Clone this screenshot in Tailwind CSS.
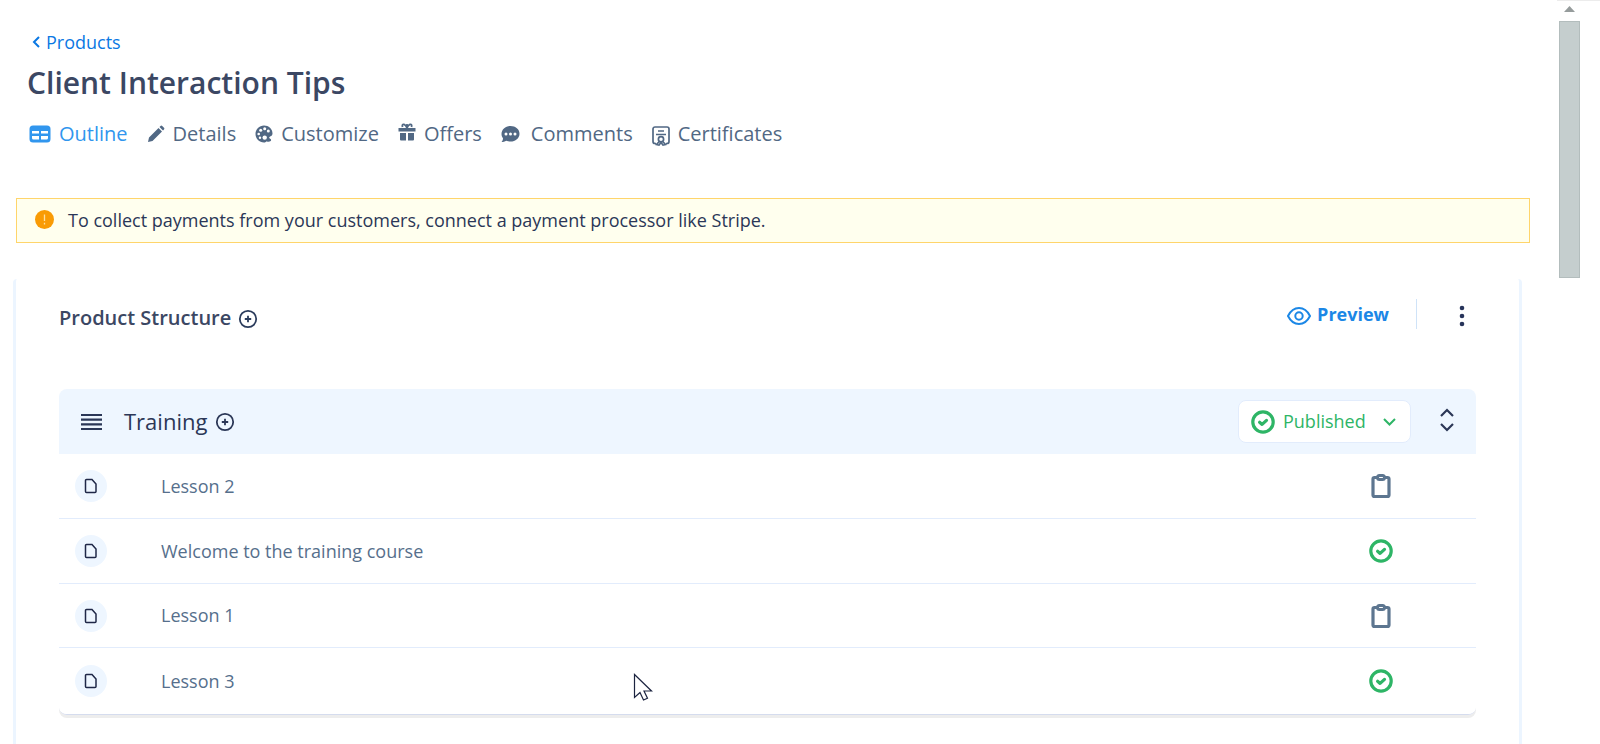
<!DOCTYPE html>
<html lang="en">
<head>
<meta charset="utf-8">
<meta name="viewport" content="width=device-width, initial-scale=1">
<title>Client Interaction Tips</title>
<script src="https://cdn.jsdelivr.net/npm/@tailwindcss/browser@4"></script>
</head>
<body class="flex min-h-screen bg-white font-['Open_Sans','Noto_Sans',sans-serif] text-[#3b4763]">
<svg class="hidden" aria-hidden="true">
  <symbol id="plus" viewBox="0 0 20 20"><g fill="none" stroke="currentColor" stroke-width="1.8"><circle cx="10" cy="10" r="8.2"/><path d="M10 6.8v6.4M6.8 10h6.4"/></g></symbol>
  <symbol id="check" viewBox="0 0 24 24"><g fill="none" stroke="currentColor" stroke-linecap="round" stroke-linejoin="round"><circle cx="12" cy="12" r="10.2" stroke-width="3.2"/><path d="M8.600 12.300l2.500 2.100 4.400-4" stroke-width="3.200"/></g></symbol>
  <symbol id="clip" viewBox="0 0 24 26"><g fill="none" stroke="currentColor" stroke-width="3.200"><rect x="4" y="4.500" width="16" height="19" rx="1.500"/><rect x="8.500" y="2.500" width="7" height="4" rx="2" stroke-width="3" fill="#fff"/></g></symbol>
  <symbol id="page" viewBox="0 0 14 16"><path d="M2.500 1.500h5.500l4 4.500v7.500a1 1 0 0 1-1 1h-8.500a1 1 0 0 1-1-1v-11a1 1 0 0 1 1-1z" fill="none" stroke="currentColor" stroke-width="1.500"/></symbol>
</svg>
<main class="min-w-0 flex-1 pr-[27px] pl-4">
  <a href="#" class="ml-[15px] mt-7 flex w-fit items-center gap-[6px] text-[18px] leading-7 text-[#0b78e3]">
    <svg class="h-[14px] w-[9px]" viewBox="0 0 9 14" fill="none" stroke="currentColor" stroke-width="2"><path d="M8 2L3 7l5 5"/></svg>Products</a>
  <h1 class="ml-[11px] mt-1 text-[30px] font-semibold leading-[46px]">Client Interaction Tips</h1>
  <nav class="ml-[13px] mt-3 flex items-center gap-[19px] text-[20px] leading-8 text-[#516884]" aria-label="Product">
    <a href="#" class="flex items-center gap-2 text-[#3196ee]"><svg class="h-[18px] w-[22px]" viewBox="0 0 22 18"><rect x="0.500" y="0.500" width="21" height="17" rx="3.500" fill="currentColor"/><path fill="#fff" d="M3 6h7v2.500H3zM12 6h7v2.500h-7zM3 11h7v3.500H4.500A1.500 1.500 0 0 1 3 13zM12 11h7v2a1.500 1.500 0 0 1-1.500 1.500H12z"/></svg>Outline</a>
    <a href="#" class="flex items-center gap-2"><svg class="h-[18px] w-[18px]" viewBox="0 0 18 18" fill="currentColor"><path d="M1 17l1-4.500L11.500 3l3.500 3.500L5.500 16zM12.500 2l1-1a1.200 1.200 0 0 1 1.700 0L17 2.800a1.200 1.200 0 0 1 0 1.700l-1 1z"/></svg>Details</a>
    <a href="#" class="flex items-center gap-2"><svg class="h-[18px] w-[18px]" viewBox="0 0 18 18"><path fill="currentColor" d="M9 .5C4.300.5.500 4.300.500 9S4.300 17.500 9 17.500c1.500 0 2.100-.7 2.700-1.300.9.900 3 .7 4-.2.700-.700.500-1.700-.5-2.200-1.300-.6-1.300-2-.1-2.400 1.500-.5 2.400-1.200 2.400-2.900C17.500 4 13.700.5 9 .5z"/><g fill="#fff"><circle cx="3.700" cy="9" r="1.300"/><circle cx="5.700" cy="5.200" r="1.500"/><circle cx="9.700" cy="3.700" r="1.500"/><circle cx="13.300" cy="6" r="1.500"/><circle cx="5" cy="12.700" r="1.200"/><circle cx="9.700" cy="12.600" r="2.200"/></g></svg>Customize</a>
    <a href="#" class="flex items-center gap-2"><svg class="mb-1 h-[18px] w-[18px]" viewBox="0 0 18 18" fill="currentColor"><path d="M0.500 5h17v3.500h-17zM2 10h6v7.500H3a1 1 0 0 1-1-1zM10 10h6v6.500a1 1 0 0 1-1 1h-5z"/><path d="M9 5C7 0 3.500 0.500 4.500 4M9 5c2-5 5.500-4.500 4.500-1M9 5V1" fill="none" stroke="currentColor" stroke-width="1.800"/></svg>Offers</a>
    <a href="#" class="flex items-center gap-[11px]"><svg class="h-[18px] w-[19px]" viewBox="0 0 19 18"><path fill="currentColor" d="M9.500 1c5 0 9 3.200 9 7.700s-4 7.800-9 7.800c-1.500 0-3-.3-4.300-.8C4 16.500 2 17 .5 17c1-1.200 1.500-2.300 1.500-3.800C1 12 .5 10.600.5 9c0-4.500 4-8 9-8z"/><g fill="#fff"><circle cx="5" cy="9" r="1.500"/><circle cx="9.500" cy="9" r="1.500"/><circle cx="14" cy="9" r="1.500"/></g></svg>Comments</a>
    <a href="#" class="flex items-center gap-2"><svg class="mt-1 h-5 w-[18px]" viewBox="0 0 18 20" fill="none" stroke="currentColor" stroke-width="1.700"><path d="M4 17.500H3a2 2 0 0 1-2-2V3a2 2 0 0 1 2-2h12a2 2 0 0 1 2 2v12.500a2 2 0 0 1-2 2h-1M6 5h6M4 8.500h10"/><circle cx="9" cy="13.200" r="2.600"/><path d="M7.300 15.500L4.500 18.500l2.500.5 2-2.500 2 2.500 2.500-.5-2.800-3"/></svg>Certificates</a>
  </nav>
  <div role="status" class="mt-12 flex h-[45px] items-center gap-[14px] border border-[#ffd56b] bg-[#ffffee] pl-[18px] text-[18px] text-[#2b3757]">
    <svg class="mb-[3px] h-[19px] w-[19px]" viewBox="0 0 19 19"><circle cx="9.500" cy="9.500" r="9.500" fill="#f99b05"/><path d="M9.500 4.500v6.500M9.500 12.800v1.600" stroke="#ffe0a0" stroke-width="1.300"/></svg>
    To collect payments from your customers, connect a payment processor like Stripe.
  </div>
  <section class="mr-2 mt-9 -ml-[3px] min-h-[466px] rounded-t border-x-[3px] border-[#ecf5ff] pl-[43px] pr-[43px] pt-[15px]">
    <div class="flex h-12 items-start">
      <h2 class="pt-2 text-[20px] font-semibold leading-8">Product Structure</h2>
      <button class="mt-[15px] ml-[7px]" aria-label="Add section"><svg class="h-5 w-5 text-[#2b3c5c]"><use href="#plus"/></svg></button>
      <div class="ml-auto flex h-10 items-center">
        <a href="#" class="flex items-center gap-[6px] text-[18px] font-bold leading-7 text-[#1b87e6]"><svg class="mt-1 h-[18px] w-6" viewBox="0 0 24 18" fill="none" stroke="currentColor" stroke-width="2"><path d="M1 9c2.500-5 6.500-8 11-8s8.500 3 11 8c-2.500 5-6.500 8-11 8S3.500 14 1 9z"/><circle cx="12" cy="9" r="3.700"/></svg>Preview</a>
        <span class="ml-[27px] h-[30px] w-px bg-[#cfe3f8]"></span>
        <button class="mt-1 mr-[11px] ml-[42px]" aria-label="More options"><svg class="h-[22px] w-[6px]" viewBox="0 0 6 22" fill="#27345a"><circle cx="3" cy="3" r="2.300"/><circle cx="3" cy="11" r="2.300"/><circle cx="3" cy="19" r="2.300"/></svg></button>
      </div>
    </div>
    <div class="mt-[47px] overflow-hidden rounded-lg border-b border-[#d5dcee] shadow-[0_3px_0_#ededed]">
      <div class="flex h-[65px] items-center bg-[#eef6ff] pr-[22px] pl-[22px] text-[#2b3757]">
        <button aria-label="Reorder section"><svg class="h-[18px] w-[21px]" viewBox="0 0 21 18" fill="none" stroke="currentColor" stroke-width="2.200"><path d="M0 2h21M0 6.700h21M0 11.300h21M0 16h21"/></svg></button>
        <h3 class="ml-[22px] text-[22px]">Training</h3>
        <button class="ml-2" aria-label="Add lesson"><svg class="h-5 w-5"><use href="#plus"/></svg></button>
        <button class="ml-auto flex h-[43px] w-[173px] items-center rounded-lg border border-[#e2ecfc] bg-white pl-3 pr-[14px] text-[18px] text-[#2eb566]"><svg class="h-6 w-6"><use href="#check"/></svg><span class="ml-2">Published</span><svg class="ml-auto h-2 w-[13px]" viewBox="0 0 13 8" fill="none" stroke="currentColor" stroke-width="2"><path d="M1 1l5.500 5.500L12 1"/></svg></button>
        <button class="ml-[29px]" aria-label="Collapse section"><svg class="mb-1 h-6 w-[14px]" viewBox="0 0 14 24" fill="none" stroke="currentColor" stroke-width="2.200"><path d="M1 8l6-6 6 6M1 16l6 6 6-6"/></svg></button>
      </div>
      <ul class="divide-y divide-[#e2ecfc] bg-white text-[18px] text-[#566f8c]">
        <li class="flex h-[65px] items-center pr-[83px] pl-4"><span class="grid h-8 w-8 place-items-center rounded-full bg-[#eef6ff]"><svg class="h-4 w-[14px] text-[#1f2747]"><use href="#page"/></svg></span><a href="#" class="ml-[54px]">Lesson 2</a><svg class="ml-auto h-[26px] w-6 text-[#5d7690]" role="img" aria-label="Draft"><use href="#clip"/></svg></li>
        <li class="flex h-[65px] items-center pr-[83px] pl-4"><span class="grid h-8 w-8 place-items-center rounded-full bg-[#eef6ff]"><svg class="h-4 w-[14px] text-[#1f2747]"><use href="#page"/></svg></span><a href="#" class="ml-[54px]">Welcome to the training course</a><svg class="ml-auto h-6 w-6 text-[#2eb566]" role="img" aria-label="Published"><use href="#check"/></svg></li>
        <li class="flex h-16 items-center pr-[83px] pl-4"><span class="grid h-8 w-8 place-items-center rounded-full bg-[#eef6ff]"><svg class="h-4 w-[14px] text-[#1f2747]"><use href="#page"/></svg></span><a href="#" class="ml-[54px]">Lesson 1</a><svg class="ml-auto h-[26px] w-6 text-[#5d7690]" role="img" aria-label="Draft"><use href="#clip"/></svg></li>
        <li class="flex h-[66px] items-center pr-[83px] pl-4"><span class="grid h-8 w-8 place-items-center rounded-full bg-[#eef6ff]"><svg class="h-4 w-[14px] text-[#1f2747]"><use href="#page"/></svg></span><a href="#" class="ml-[54px]">Lesson 3</a><svg class="ml-auto h-6 w-6 text-[#2eb566]" role="img" aria-label="Published"><use href="#check"/></svg></li>
      </ul>
    </div>
  </section>
</main>
<aside class="w-[43px] border-t border-[#ececec] pl-[2px]" aria-hidden="true">
  <svg class="mt-[5px] mb-[9px] ml-[5px] h-[6px] w-[11px]" viewBox="0 0 11 6"><path d="M5.500 0L11 6H0z" fill="#969c9c"/></svg>
  <div class="h-[257px] w-[21px] border border-[#b3bdbd] bg-[#c5cece]"></div>
</aside>
<svg class="absolute top-[673px] left-[633px] h-7 w-5" viewBox="0 0 20 28" aria-hidden="true"><path d="M1.500 1.500v23l5.500-5 3.500 7.500 4-1.800-3.500-7.200h7.500z" fill="#fff" stroke="#1c2440" stroke-width="1.200"/></svg>
</body>
</html>
